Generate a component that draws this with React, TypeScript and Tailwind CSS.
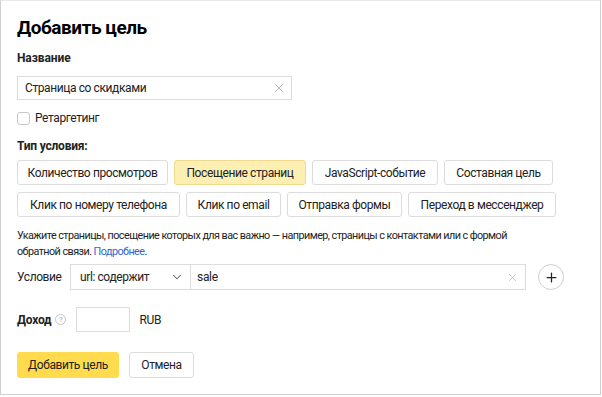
import { X, ChevronDown, Plus } from 'lucide-react';

const row1 = [
    { label: 'Количество просмотров', w: 'w-[151px]' },
    { label: 'Посещение страниц', w: 'w-[132px]', active: true },
    { label: 'JavaScript-событие', w: 'w-[126px]' },
    { label: 'Составная цель', w: 'w-[109px]' },
];
const row2 = [
    { label: 'Клик по номеру телефона', w: 'w-[163px]' },
    { label: 'Клик по email', w: 'w-[95px]' },
    { label: 'Отправка формы', w: 'w-[115px]' },
    { label: 'Переход в мессенджер', w: 'w-[148px]' },
];

function TypeButton({ label, w, active }: { label: string; w: string; active?: boolean }) {
    return (
        <button
            className={
                'h-[25px] rounded-[3px] border text-[12px] tracking-[-0.4px] leading-none whitespace-nowrap text-[#222] ' +
                w +
                (active ? ' bg-[#fdefb2] border-[#efd98c]' : ' bg-white border-[#dcdcdc]')
            }
        >
            {label}
        </button>
    );
}

export default function App() {
    return (
        <div className="w-[602px] h-[397px] bg-white" style={{ fontFamily: 'Roboto, "Liberation Sans", Arial, sans-serif' }}>
            <div className="w-[601px] h-[395px] border border-[#cfcfcf] border-t-[#e8e8e8] px-[16px] pt-[16px] text-[#222]">
                <h1 className="text-[19px] font-bold leading-[22px] tracking-[-0.45px] text-black">Добавить цель</h1>

                <div className="mt-[11px] text-[12px] font-bold leading-[16px] tracking-[-0.1px]">Название</div>
                <div className="mt-[10px] w-[275px] h-[24px] border border-[#dcdcdc] flex items-center pl-[7px] pr-[5px]">
                    <span className="flex-1 text-[12px] tracking-[-0.4px]">Страница со скидками</span>
                    <X size={14} strokeWidth={1.2} className="text-[#999]" />
                </div>

                <label className="mt-[9px] h-[18px] flex items-center gap-[5px] text-[12px] tracking-[-0.4px]">
                    <span className="w-[13px] h-[13px] border border-[#c8c8c8] rounded-[3px] bg-white" />
                    Ретаргетинг
                </label>

                <div className="mt-[11px] text-[12px] font-bold leading-[16px] tracking-[-0.2px]">Тип условия:</div>
                <div className="mt-[6px] flex gap-[6px]">
                    {row1.map((b) => (
                        <TypeButton key={b.label} label={b.label} w={b.w} active={b.active} />
                    ))}
                </div>
                <div className="mt-[7px] flex gap-[6px]">
                    {row2.map((b) => (
                        <TypeButton key={b.label} label={b.label} w={b.w} />
                    ))}
                </div>

                <p className="mt-[11px] text-[10.8px] leading-[16px] tracking-[-0.55px] text-[#222] w-[500px]">
                    Укажите страницы, посещение которых для вас важно — например, страницы с контактами или с формой
                    обратной связи. <span className="text-[#3366cc]">Подробнее</span>.
                </p>

                <div className="mt-[4px] flex items-center">
                    <span className="w-[53px] text-[12px] tracking-[-0.4px]">Условие</span>
                    <div className="h-[26px] w-[121px] border border-[#dcdcdc] flex items-center pl-[9px] pr-[6px] text-[12px] tracking-[-0.4px]">
                        <span className="flex-1 whitespace-nowrap">url: содержит</span>
                        <ChevronDown size={14} strokeWidth={1.6} className="text-[#333]" />
                    </div>
                    <div className="h-[26px] w-[335px] border border-l-0 border-[#dcdcdc] flex items-center pl-[6px] pr-[6px] text-[12px] tracking-[-0.3px]">
                        <span className="flex-1">sale</span>
                        <X size={13} strokeWidth={1.1} className="text-[#aaa]" />
                    </div>
                    <div className="ml-[12px] w-[26px] h-[26px] rounded-full border border-[#cfcfcf] flex items-center justify-center">
                        <Plus size={15} strokeWidth={2} className="text-[#222]" />
                    </div>
                </div>

                <div className="mt-[17px] h-[25px] flex items-center">
                    <span className="text-[12px] font-bold tracking-[-0.2px]">Доход</span>
                    <span className="ml-[4px] w-[11px] h-[11px] rounded-full border border-[#c4c4c4] text-[8px] text-[#aaa] flex items-center justify-center leading-none">
                        ?
                    </span>
                    <div className="ml-[10px] w-[54px] h-[25px] border border-[#dcdcdc]" />
                    <span className="ml-[9px] text-[12px] tracking-[-0.3px]">RUB</span>
                </div>

                <div className="mt-[20px] flex gap-[10px]">
                    <button className="h-[26px] w-[102px] rounded-[3px] bg-[#ffdb4d] text-[12px] tracking-[-0.4px] text-[#222]">
                        Добавить цель
                    </button>
                    <button className="h-[26px] w-[65px] rounded-[3px] border border-[#dcdcdc] bg-white text-[12px] tracking-[-0.4px] text-[#222]">
                        Отмена
                    </button>
                </div>
            </div>
        </div>
    );
}
